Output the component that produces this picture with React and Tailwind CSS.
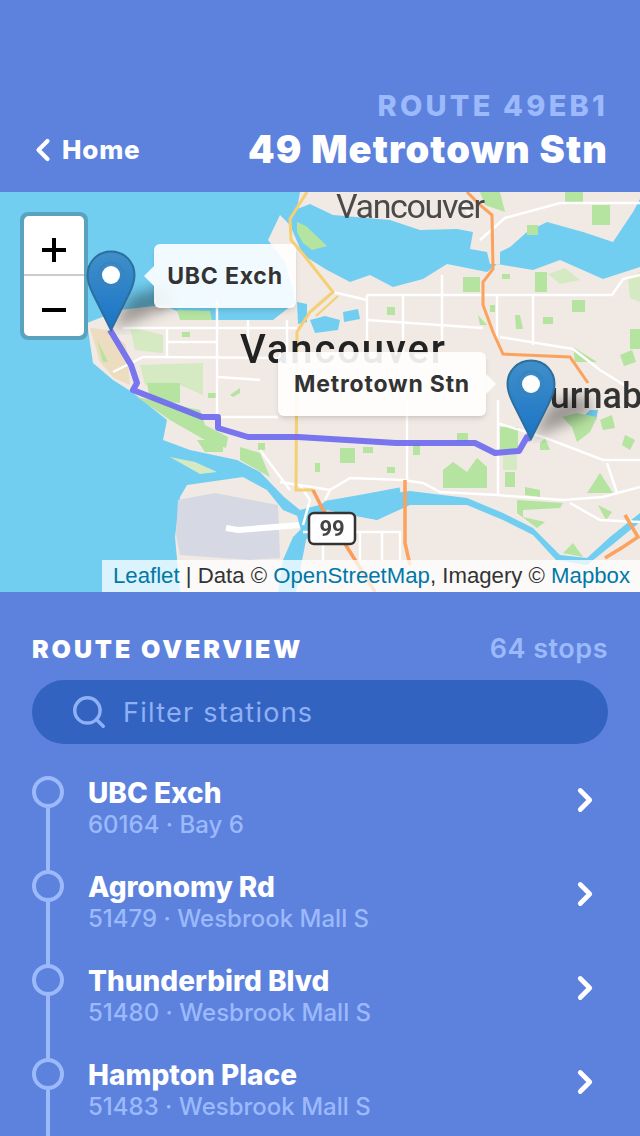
import React from "react";
import { ChevronRight, ChevronLeft, Search } from "lucide-react";

const stops = [
  { name: "UBC Exch", sub: "60164 · Bay 6" },
  { name: "Agronomy Rd", sub: "51479 · Wesbrook Mall S" },
  { name: "Thunderbird Blvd", sub: "51480 · Wesbrook Mall S" },
  { name: "Hampton Place", sub: "51483 · Wesbrook Mall S" },
];

const WATER = "#72cef1";
const LAND = "#f0e9e4";
const GREEN = "#b5e3a0";
const PALE = "#d5e9c2";
const TAN = "#ecdcc0";

const greens = [
  "M297 222 L306 226 L327 246 L312 250 L303 243 L297 232 Z",
  "M177 310 L210 311 L212 320 L180 320 Z",
  "M137 397 L200 410 L205 425 L228 437 L226 448 L205 440 L170 420 Z",
  "M147 383 L180 383 L180 403 L150 400 Z",
  "M182 332 L190 332 L190 337 L182 337 Z",
  "M208 393 L217 393 L217 398 L208 398 Z",
  "M230 395 L240 388 L240 393 L233 397 Z",
  "M240 447 L260 453 L270 477 L240 460 Z",
  "M197 440 L223 440 L223 452 L205 452 Z",
  "M258 443 L265 443 L265 450 L258 450 Z",
  "M340 448 L355 448 L355 463 L340 463 Z",
  "M363 447 L373 447 L373 453 L363 453 Z",
  "M315 463 L320 463 L320 472 L315 472 Z",
  "M387 467 L395 467 L395 473 L387 473 Z",
  "M500 427 L518 427 L518 450 L500 450 Z",
  "M443 470 L453 462 L467 472 L477 458 L487 467 L487 488 L443 488 Z",
  "M505 472 L515 472 L515 487 L505 487 Z",
  "M525 487 L540 490 L540 497 L525 495 Z",
  "M587 493 L600 473 L613 493 Z",
  "M517 500 L563 503 L560 508 L523 510 L523 517 L545 522 L537 528 L517 513 Z",
  "M563 553 L573 543 L583 557 Z",
  "M562 417 L577 413 L597 417 L590 432 L577 442 L572 427 Z",
  "M457 433 L468 433 L468 442 L457 442 Z",
  "M413 443 L420 443 L420 455 L413 455 Z",
  "M540 443 L545 438 L550 450 L540 450 Z",
  "M463 277 L480 277 L480 292 L463 292 Z",
  "M535 272 L547 272 L547 292 L535 292 Z",
  "M502 274 L510 274 L510 279 L502 279 Z",
  "M387 307 L395 307 L395 315 L387 315 Z",
  "M572 300 L585 300 L585 312 L572 312 Z",
  "M630 329 L640 329 L640 349 L630 349 Z",
  "M543 317 L553 317 L553 324 L543 324 Z",
  "M592 205 L610 205 L610 225 L592 225 Z",
  "M565 192 L583 192 L583 202 L565 202 Z",
  "M527 225 L538 225 L538 235 L527 235 Z",
  "M515 315 L520 315 L523 329 L516 329 Z",
  "M490 305 L495 305 L495 312 L490 312 Z",
  "M478 315 L487 325 L480 325 Z",
  "M573 347 L597 362 L575 362 Z",
  "M480 192 L500 192 L505 212 L485 205 Z",
  "M620 355 L632 350 L636 362 L624 366 Z",
  "M600 420 L612 415 L615 428 L603 430 Z",
  "M625 435 L635 440 L630 450 L622 445 Z",
  "M598 505 L612 512 L606 520 Z",
];

const paleGreens = [
  "M130 327 L163 335 L163 353 L135 350 Z",
  "M140 365 L203 363 L203 395 L180 385 L145 385 Z",
  "M503 455 L517 455 L517 470 L503 470 Z",
  "M548 274 L565 268 L580 280 L560 284 Z",
  "M628 279 L640 272 L640 302 L630 298 Z",
  "M170 457 L195 462 L217 472 L200 474 Z",
];

const whiteRoads = [
  "M367 295 L612 295 L623 279 L640 275",
  "M367 320 L483 328",
  "M500 337 L573 349 L600 370 L640 395",
  "M367 295 L367 360",
  "M403 295 L403 352",
  "M442 275 L442 345",
  "M497 295 L497 340",
  "M533 295 L533 345",
  "M167 328 L167 357",
  "M217 300 L217 418",
  "M248 320 L248 355",
  "M287 320 L287 352",
  "M123 328 L297 328",
  "M167 342 L217 342",
  "M143 357 L293 358",
  "M113 372 L143 357",
  "M218 377 L260 380",
  "M220 417 L278 417",
  "M497 423 L543 437 L603 460 L640 460",
  "M280 482 L330 490 L350 478 L403 480 L423 483 L440 492 L497 495 L563 500 L603 497 L640 487",
  "M570 503 L600 520 L640 522",
  "M498 400 L498 495",
  "M407 400 L407 480",
  "M607 463 L617 493",
  "M260 450 L290 490",
  "M303 532 L400 532 L400 560",
  "M323 532 L323 560",
  "M360 532 L360 560",
  "M382 532 L382 560",
  "M480 240 L505 218 L560 203 L640 203",
  "M300 485 L310 500 L303 525",
  "M330 490 L325 500",
  "M460 200 L470 215",
  "M333 292 L367 300",
];

const attribution = [
  ["Leaflet", true], [" | Data © ", false], ["OpenStreetMap", true], [", Imagery © ", false], ["Mapbox", true],
];

const Pin = ({ className }) => (
  <svg className={className} width="50" height="82" viewBox="0 0 50 82">
    <defs>
      <linearGradient id="pinFill" x1="0" y1="0" x2="0" y2="1">
        <stop offset="0" stopColor="#3f8fc9" />
        <stop offset="1" stopColor="#1b74c6" />
      </linearGradient>
    </defs>
    <path d="M25 1.5 C11.5 1.5 1.5 12 1.5 25 C1.5 32 3.5 37 7 44 L25 80 L43 44 C46.5 37 48.5 32 48.5 25 C48.5 12 38.5 1.5 25 1.5 Z" fill="url(#pinFill)" stroke="#2c6f9f" strokeWidth="2" />
    <circle cx="25" cy="25" r="12.5" fill="none" stroke="#3a83bd" strokeWidth="2" />
    <circle cx="25" cy="25" r="9" fill="#fff" />
  </svg>
);

const MapArt = () => (
  <svg className="block blur-[0.5px]" width="640" height="400" viewBox="0 192 640 400">
    <defs>
      <filter id="pinShadow"><feGaussianBlur stdDeviation="7" /></filter>
    </defs>
    <rect x="0" y="192" width="640" height="400" fill={WATER} />
    {/* north shore */}
    <path d="M300 192 L297 209 L310 204 L333 215 L390 220 L420 230 L457 229 L473 232 L470 249 L487 252 L490 264 L500 264 L500 252 L510 247 L527 232 L547 222 L583 232 L613 242 L633 212 L640 199 L640 192 Z" fill={LAND} />
    {/* vancouver + burnaby */}
    <path d="M640 267 L603 279 L560 260 L533 270 L497 264 L487 272 L447 264 L423 279 L393 287 L370 275 L350 282 L327 270 L303 255 L290 225 L280 215 L268 240 L285 262 L296 302 L273 320 L197 320 L163 305 L120 310 L87 323 L93 363 L113 380 L132 392 L167 420 L163 440 L190 450 L237 460 L260 472 L284 497 L300 510 L327 503 L357 498 L410 491 L467 498 L503 513 L533 528 L560 555 L587 558 L610 537 L640 513 Z" fill={LAND} />
    {/* richmond and the south bank */}
    <path d="M296 592 L306 540 L327 510 L350 515 L377 520 L410 505 L467 505 L503 520 L533 535 L556 560 L587 565 L612 545 L640 522 L640 592 Z" fill={LAND} />
    {/* sea island */}
    <path d="M187 485 L243 477 L267 490 L283 510 L300 517 L303 527 L293 537 L283 560 L278 592 L180 592 L175 537 L180 497 Z" fill={LAND} />
    <path d="M178 500 L215 493 L278 505 L280 558 L250 560 L180 555 L176 535 Z" fill="#d6d9e4" />
    <path d="M226 528 L238 530 L300 525" stroke="#fff" strokeWidth="6" fill="none" />
    {/* false creek */}
    <path d="M297 302 L307 304 L307 322 L298 324 Z M310 320 L325 316 L340 320 L338 330 L315 333 Z M343 312 L358 309 L360 319 L344 322 Z" fill={WATER} />
    {/* rivers */}
    <path d="M400 490 L357 498 L327 503 L316 512 M400 503 L377 517 L350 512 L327 507" stroke={WATER} strokeWidth="5" fill="none" />
    <path d="M300 515 L304 530 L290 558" stroke={WATER} strokeWidth="6" fill="none" />
    <path d="M590 410 L598 410 L596 420 L580 420 Z" fill={WATER} />

    {paleGreens.map((d, i) => (
      <path key={i} d={d} fill={PALE} />
    ))}
    {greens.map((d, i) => (
      <path key={i} d={d} fill={GREEN} />
    ))}
    <path d="M90 328 L100 362 L114 378 L130 385 L126 345 L108 330 Z" fill={TAN} />
    <path d="M97 340 L108 362 L103 362 Z" fill={GREEN} />
    {whiteRoads.map((d, i) => (
      <path key={i} d={d} stroke="#fff" strokeWidth="2.5" fill="none" />
    ))}

    {/* highways */}
    <path d="M307 192 L290 219 L291 240 L303 254 L333 292 L310 312 L297 332 L296 490 L313 490" stroke="#f5cf73" strokeWidth="3" fill="none" />
    <path d="M316 316 L338 296" stroke="#f5cf73" strokeWidth="2" fill="none" />
    <path d="M467 192 L480 205 L492 215 L493 269 L483 282 L483 305 L493 332 L503 354 L570 357 L588 383" stroke="#fba25c" strokeWidth="3" fill="none" />
    <path d="M313 490 L323 510 L347 547 L375 592" stroke="#fb9c5a" strokeWidth="3.5" fill="none" />
    <path d="M405 480 L405 543 L410 565 M625 515 L638 537 L623 547 L605 558" stroke="#fba25c" strokeWidth="3.5" fill="none" />

    {/* labels */}
    <text x="336" y="218" fontFamily="Roboto, sans-serif" fontSize="34" fill="#4a4a4a" textLength="149">Vancouver</text>
    <text x="240" y="363" fontFamily="Roboto, sans-serif" fontWeight="500" fontSize="40" fill="#222" textLength="205">Vancouver</text>
    <text x="527" y="408" fontFamily="Roboto, sans-serif" fontWeight="500" fontSize="36" fill="#333">Burnaby</text>
    <rect x="309" y="513" width="46" height="31" rx="5" fill="#fff" stroke="#333" strokeWidth="2.5" />
    <text x="332" y="536" textAnchor="middle" fontFamily="Roboto, sans-serif" fontWeight="700" fontSize="22" fill="#444">99</text>

    {/* route */}
    <path d="M110 330 L131 365 L137 383 L133 390 L202 417 L218 417 L218 428 L248 437 L298 437 L396 443 L475 443 L495 453 L519 451 L527 437 L531 439" stroke="#6e6af0" strokeOpacity="0.92" strokeWidth="6" fill="none" strokeLinejoin="round" />

    {/* marker shadows */}
    <path d="M112 330 L130 296 L165 286 L172 305 Z" fill="#000" fillOpacity="0.36" filter="url(#pinShadow)" />
    <path d="M532 438 L550 404 L585 394 L592 413 Z" fill="#000" fillOpacity="0.36" filter="url(#pinShadow)" />
  </svg>
);

const Tooltip = ({ children, side, className }) => (
  <div className={`absolute flex h-16 items-center justify-center rounded-md bg-white/90 text-[23px] font-bold tracking-[0.8px] text-[#333] shadow-md ${className}`}>
    {children}
    {side === "left" ? (
      <span className="absolute -left-[10px] top-[22px] h-0 w-0 border-y-[10px] border-r-[10px] border-y-transparent border-r-white/90" />
    ) : (
      <span className="absolute -right-[10px] top-[22px] h-0 w-0 border-y-[10px] border-l-[10px] border-y-transparent border-l-white/90" />
    )}
  </div>
);

export default function App() {
  return (
    <div className="h-[1136px] w-[640px] overflow-hidden bg-[#5d82de] font-['Inter',sans-serif]">
      <header className="flex h-[192px] items-end justify-between px-8 pb-[21px]">
        <div className="mb-[2px] flex items-center gap-[1px] text-white">
          <ChevronLeft size={36} strokeWidth={2.8} className="-ml-[7px]" />
          <span className="text-[26px] font-extrabold tracking-[0.8px]">Home</span>
        </div>
        <div className="text-right">
          <div className="mb-[5px] text-[29px] leading-[32px] font-extrabold tracking-[3.2px] text-[#9bb9fb]">ROUTE 49EB1</div>
          <div className="text-[38px] leading-[44px] font-black tracking-[1.1px] text-white">49 Metrotown Stn</div>
        </div>
      </header>

      <div className="relative h-[400px] overflow-hidden">
        <MapArt />
        <div className="absolute left-[20px] top-[20px] w-[68px] rounded-lg bg-[#5aa3bf] p-[4px]">
          <div className="overflow-hidden rounded-[5px] bg-white text-black">
            <div className="flex h-[60px] items-center justify-center border-b-2 border-[#ccc] pt-[10px]">
              <svg width="26" height="26" viewBox="0 0 26 26"><path d="M13 1 V25 M1 13 H25" stroke="#000" strokeWidth="4" /></svg>
            </div>
            <div className="flex h-[60px] items-center justify-center pt-[8px]">
              <svg width="26" height="26" viewBox="0 0 26 26"><path d="M1 13 H25" stroke="#000" strokeWidth="4" /></svg>
            </div>
          </div>
        </div>
        <Pin className="absolute left-[86px] top-[58px]" />
        <Pin className="absolute left-[506px] top-[167px]" />
        <Tooltip side="left" className="left-[154px] top-[52px] w-[142px]">UBC Exch</Tooltip>
        <Tooltip side="right" className="left-[278px] top-[160px] w-[208px]">Metrotown Stn</Tooltip>
        <div className="absolute bottom-0 right-0 flex h-8 w-[538px] items-center justify-end whitespace-pre bg-white/75 pr-[10px] font-['Liberation_Sans',sans-serif] text-[22.2px] text-[#333]">
          {attribution.map(([text, link]) => (
            <span key={text} className={link ? "text-[#0078a8]" : ""}>{text}</span>
          ))}
        </div>
      </div>

      <section className="px-8 pt-[40px]">
        <div className="flex items-center justify-between">
          <h2 className="text-[25px] leading-[34px] font-black tracking-[2.9px] text-white">ROUTE OVERVIEW</h2>
          <span className="text-[27px] leading-[34px] font-semibold tracking-[0.5px] text-[#9bb9fb]">64 stops</span>
        </div>
        <div className="mt-[14px] flex h-16 items-center rounded-full bg-[#3363c1] pl-[38px] text-[#8fb0f5]">
          <Search size={38} strokeWidth={2.2} />
          <span className="ml-[15px] mt-[2px] text-[27px] tracking-[1.25px]">Filter stations</span>
        </div>
        <ul className="mt-[32px]">
          {stops.map((stop) => (
            <li key={stop.name} className="flex h-[94px]">
              <div className="flex w-8 flex-col items-center">
                <span className="h-8 w-8 shrink-0 rounded-full border-4 border-[#9bb9fb]" />
                <span className="w-1 flex-1 bg-[#9bb9fb]" />
              </div>
              <div className="ml-6 flex-1 -mt-[1px]">
                <div className="text-[28px] leading-[36px] font-extrabold text-white">{stop.name}</div>
                <div className="mt-[1px] text-[24px] leading-[26px] font-medium text-[#9bb9fb]">{stop.sub}</div>
              </div>
              <ChevronRight size={38} strokeWidth={3} className="mr-[4px] mt-[5px] text-white" />
            </li>
          ))}
        </ul>
      </section>
    </div>
  );
}
